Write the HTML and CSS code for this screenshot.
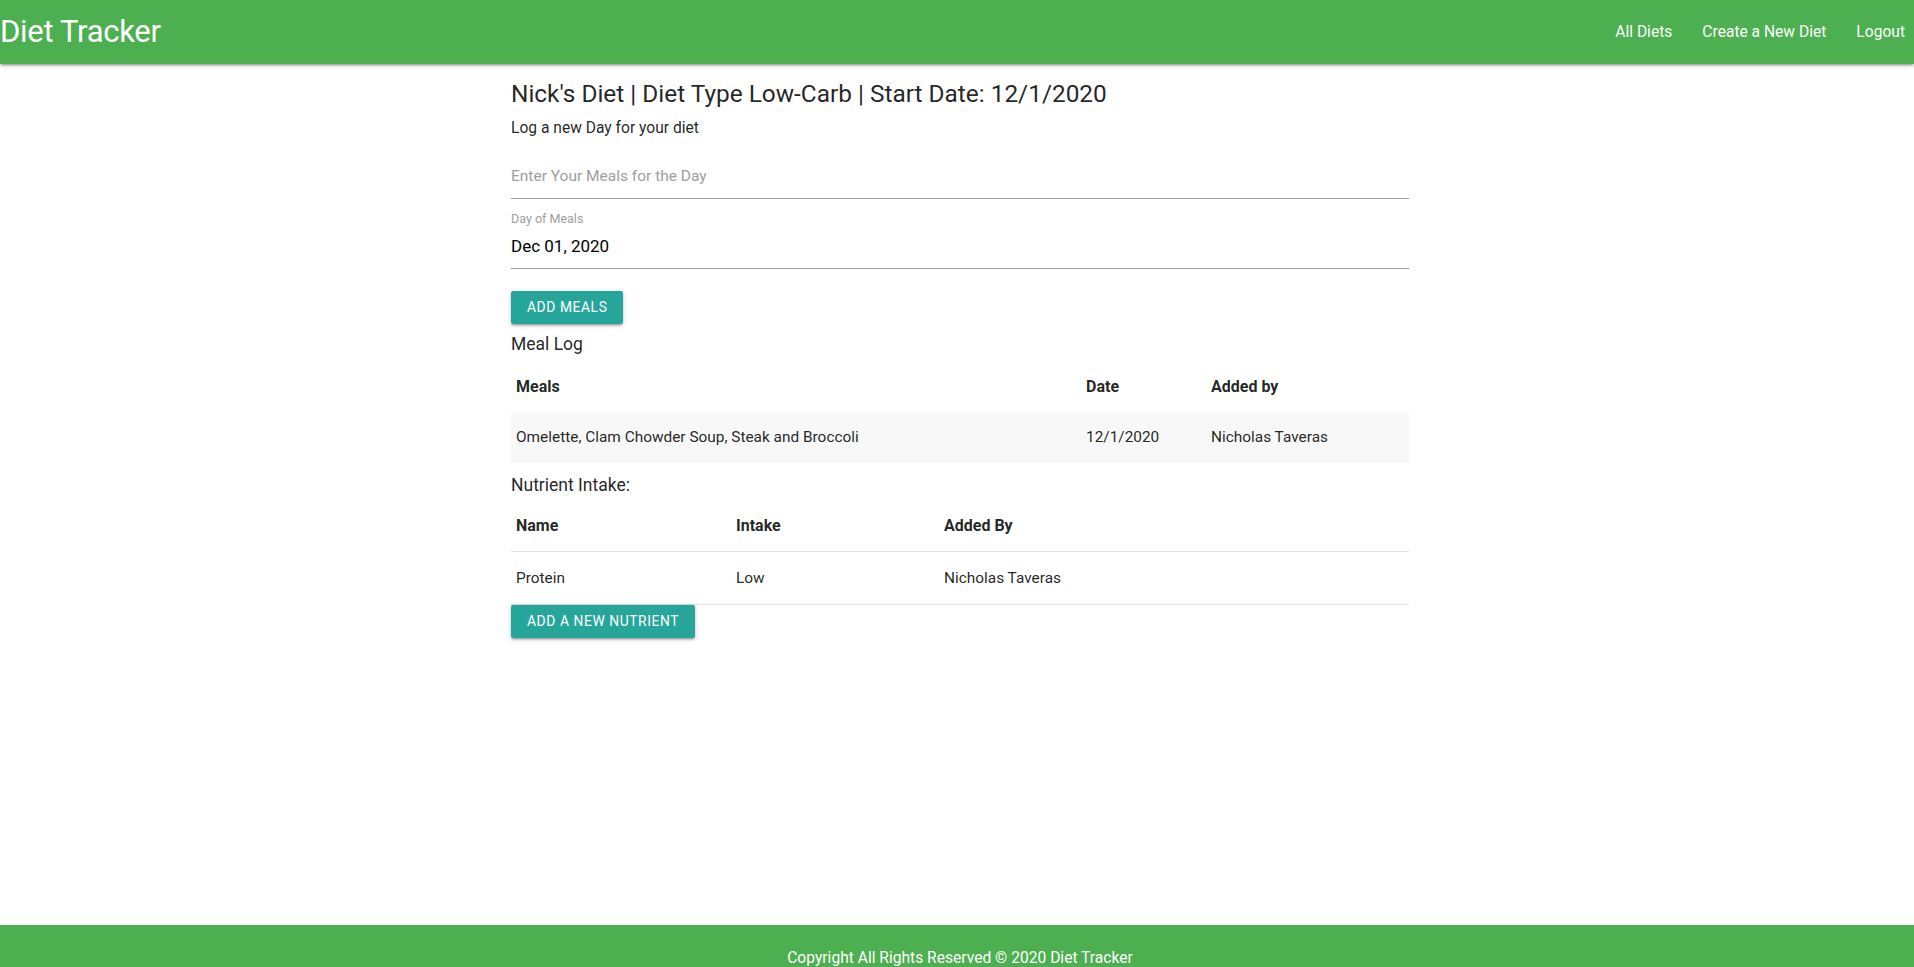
FILE: index.html
```html
<!DOCTYPE html>
<html lang="en">
<head>
<meta charset="utf-8">
<title>Diet Tracker</title>
<link rel="stylesheet" href="styles.css">
</head>
<body>
<div class="page">
  <nav class="navbar">
    <a class="brand" href="#">Diet Tracker</a>
    <ul class="nav-links">
      <li><a href="#">All Diets</a></li>
      <li><a href="#">Create a New Diet</a></li>
      <li><a href="#">Logout</a></li>
    </ul>
  </nav>
  <main class="main">
    <div class="container">
      <h5 class="title">Nick's Diet | Diet Type Low-Carb | Start Date: 12/1/2020</h5>
      <p class="subtitle">Log a new Day for your diet</p>
      <div class="field field-meals">
        <input class="text-input" type="text" placeholder="Enter Your Meals for the Day">
      </div>
      <div class="field field-date">
        <label class="field-label">Day of Meals</label>
        <input class="text-input date-input" type="text" value="Dec 01, 2020">
      </div>
      <button class="btn btn-meals">Add Meals</button>
      <h6 class="section-title">Meal Log</h6>
      <table class="table striped">
        <thead>
          <tr><th class="c-meals">Meals</th><th class="c-date">Date</th><th>Added by</th></tr>
        </thead>
        <tbody>
          <tr><td>Omelette, Clam Chowder Soup, Steak and Broccoli</td><td>12/1/2020</td><td>Nicholas Taveras</td></tr>
        </tbody>
      </table>
      <h6 class="section-title section-nutrient">Nutrient Intake:</h6>
      <table class="table bordered">
        <thead>
          <tr><th class="c-name">Name</th><th class="c-intake">Intake</th><th>Added By</th></tr>
        </thead>
        <tbody>
          <tr><td>Protein</td><td>Low</td><td>Nicholas Taveras</td></tr>
        </tbody>
      </table>
      <button class="btn">Add a New Nutrient</button>
    </div>
  </main>
  <footer class="footer">
    <div class="footer-text">Copyright All Rights Reserved © 2020 Diet Tracker</div>
  </footer>
</div>
</body>
</html>
```
FILE: styles.css
```css
* { box-sizing: border-box; }
html, body { margin: 0; padding: 0; }
body {
  font-family: Roboto, "Liberation Sans", sans-serif;
  color: rgba(0,0,0,0.87);
  background: #fff;
  overflow: hidden;
}
.page {
  display: flex;
  flex-direction: column;
  min-height: 100vh;
}
.navbar {
  height: 64px;
  background: #4caf50;
  display: flex;
  align-items: center;
  justify-content: space-between;
  box-shadow: 0 2px 2px 0 rgba(0,0,0,.14), 0 3px 1px -2px rgba(0,0,0,.12), 0 1px 5px 0 rgba(0,0,0,.2);
  position: relative;
  z-index: 2;
}
.brand {
  color: #fff;
  text-decoration: none;
  font-size: 31px;
  line-height: 64px;
  letter-spacing: -0.3px;
}
.nav-links {
  list-style: none;
  margin: 0 -6px 0 0;
  padding: 0;
  display: flex;
}
.nav-links a {
  display: block;
  color: #fff;
  text-decoration: none;
  font-size: 15.6px;
  line-height: 64px;
  padding: 0 15px;
}
.main {
  flex: 1;
  padding-left: 6px;
}
.container {
  width: 898px;
  margin: 0 auto;
}
.title {
  margin: 15px 0 0;
  font-size: 24.4px;
  font-weight: 400;
  line-height: 30px;
}
.subtitle {
  margin: 9px 0 0;
  font-size: 15.6px;
  line-height: 20px;
}
.field-meals { margin-top: 14px; }
.field-date { margin-top: 13px; }
.text-input {
  display: block;
  width: 100%;
  border: none;
  border-bottom: 1px solid #9e9e9e;
  outline: none;
  background: transparent;
  font-family: inherit;
  font-size: 15.5px;
  height: 47px;
  padding: 2px 0 0;
  color: rgba(0,0,0,0.87);
}
.text-input::placeholder { color: #9e9e9e; }
.date-input { height: 45px; padding: 0 0 1px; margin-top: -1px; font-size: 17px; color: #000; }
.field-label {
  display: block;
  font-size: 12.5px;
  line-height: 13px;
  color: #9e9e9e;
}
.btn {
  display: inline-block;
  border: none;
  border-radius: 2px;
  background: #26a69a;
  color: #fff;
  font-family: inherit;
  font-size: 13.8px;
  letter-spacing: .6px;
  text-transform: uppercase;
  height: 33px;
  line-height: 33px;
  padding: 0 16px;
  box-shadow: 0 2px 2px 0 rgba(0,0,0,.14), 0 3px 1px -2px rgba(0,0,0,.12), 0 1px 5px 0 rgba(0,0,0,.2);
  cursor: pointer;
}
.btn-meals { margin-top: 22px; }
.section-title {
  margin: 9px 0 0;
  font-size: 17.5px;
  font-weight: 400;
  line-height: 22px;
}
.section-nutrient { margin-top: 11px; }
.table {
  width: 100%;
  border-collapse: collapse;
  margin-top: 6px;
  font-size: 15.4px;
}
.striped { margin-top: 6px; }
.striped th { padding: 15px 5px 16px; }
.bordered { margin-top: 4px; }
.table th, .table td {
  padding: 15px 5px;
  line-height: 21px;
  text-align: left;
  vertical-align: middle;
}
.table th { font-weight: 700; font-size: 16px; }
.striped tbody tr:nth-child(odd) { background: rgba(242,242,242,.5); }
.bordered tr { border-bottom: 1px solid rgba(0,0,0,.12); }
.bordered th { padding: 15px 5px 15px; }
.bordered td { padding: 16px 5px 15px; }
.c-meals { width: 570px; }
.c-date { width: 125px; }
.c-name { width: 220px; }
.c-intake { width: 208px; }
.footer {
  height: 42px;
  background: #4caf50;
  padding-left: 6px;
  padding-top: 24px;
}
.footer-text {
  text-align: center;
  color: #fff;
  font-size: 15.6px;
  line-height: 18px;
}
```
